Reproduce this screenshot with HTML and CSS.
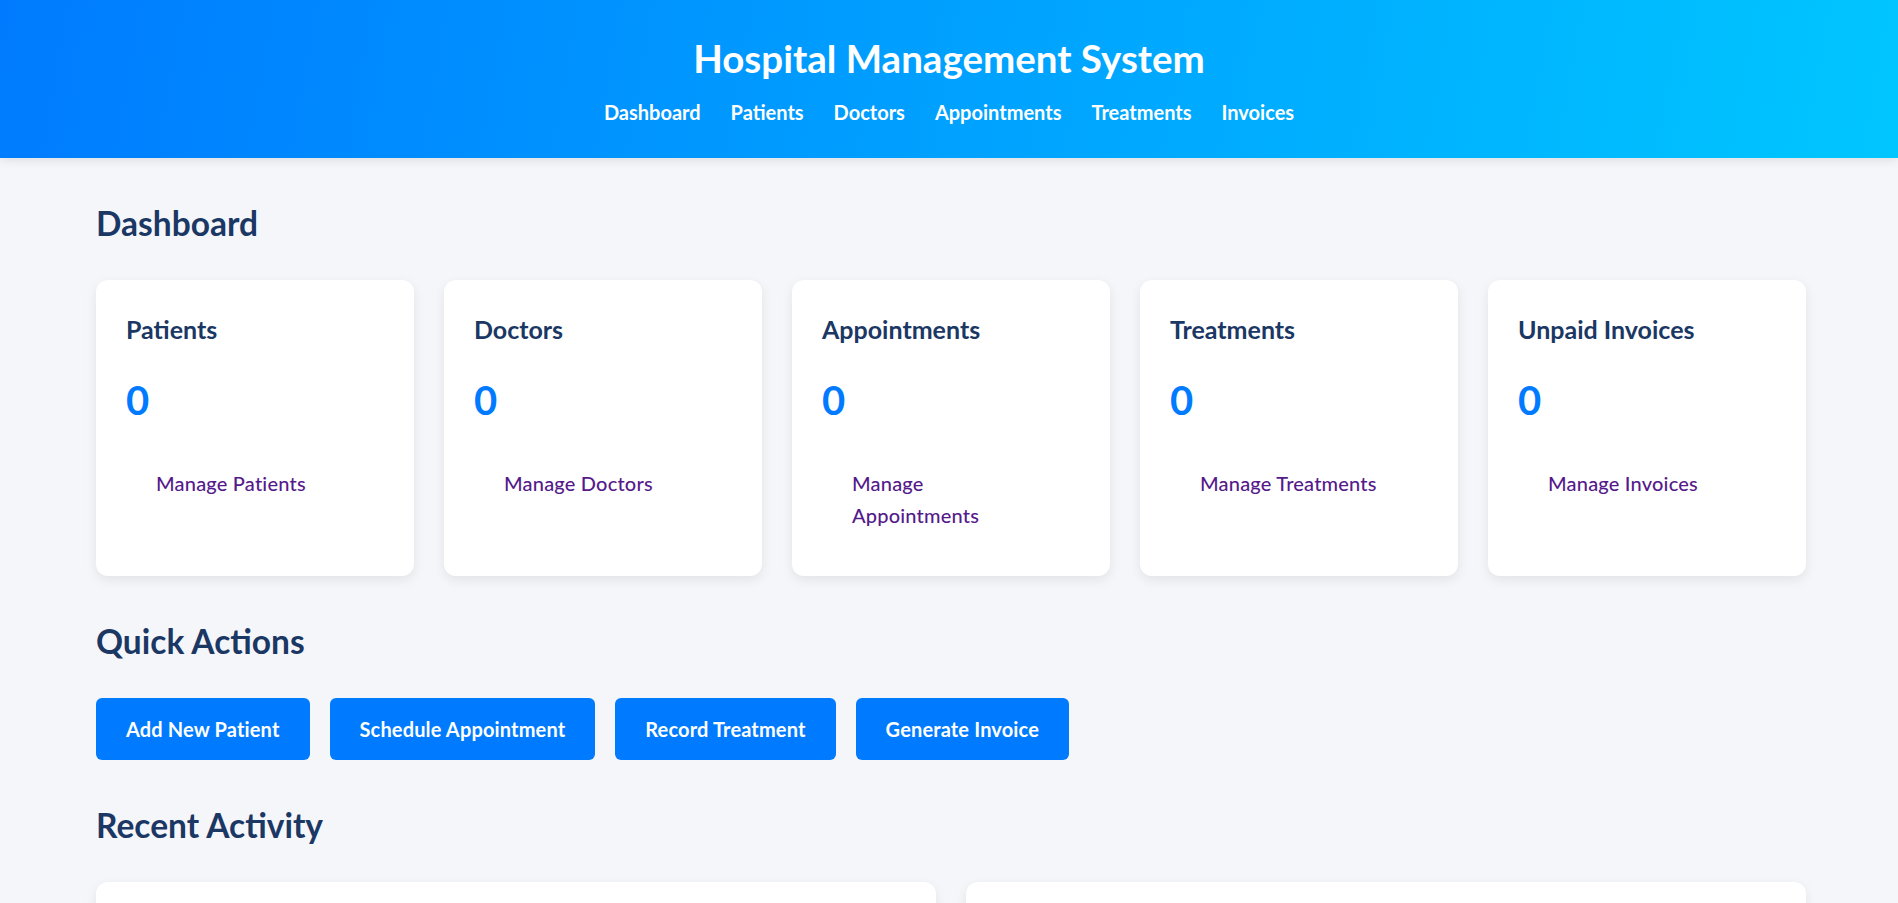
FILE: index.html
```html
<!DOCTYPE html>
<html lang="en">
<head>
<meta charset="UTF-8">
<title>Hospital Management System</title>
<link rel="stylesheet" href="styles.css">
</head>
<body>
<header class="site-header">
  <h1 class="site-title">Hospital Management System</h1>
  <nav class="main-nav">
    <a href="#">Dashboard</a>
    <a href="#">Patients</a>
    <a href="#">Doctors</a>
    <a href="#">Appointments</a>
    <a href="#">Treatments</a>
    <a href="#">Invoices</a>
  </nav>
</header>
<main class="container">
  <section class="section">
    <h2 class="section-title">Dashboard</h2>
    <div class="stats-grid">
      <div class="stat-card">
        <h3 class="stat-title">Patients</h3>
        <p class="stat-number">0</p>
        <a class="stat-link" href="#">Manage Patients</a>
      </div>
      <div class="stat-card">
        <h3 class="stat-title">Doctors</h3>
        <p class="stat-number">0</p>
        <a class="stat-link" href="#">Manage Doctors</a>
      </div>
      <div class="stat-card">
        <h3 class="stat-title">Appointments</h3>
        <p class="stat-number">0</p>
        <a class="stat-link" href="#">Manage Appointments</a>
      </div>
      <div class="stat-card">
        <h3 class="stat-title">Treatments</h3>
        <p class="stat-number">0</p>
        <a class="stat-link" href="#">Manage Treatments</a>
      </div>
      <div class="stat-card">
        <h3 class="stat-title">Unpaid Invoices</h3>
        <p class="stat-number">0</p>
        <a class="stat-link" href="#">Manage Invoices</a>
      </div>
    </div>
  </section>
  <section class="section">
    <h2 class="section-title">Quick Actions</h2>
    <div class="actions">
      <a class="btn" href="#">Add New Patient</a>
      <a class="btn" href="#">Schedule Appointment</a>
      <a class="btn" href="#">Record Treatment</a>
      <a class="btn" href="#">Generate Invoice</a>
    </div>
  </section>
  <section class="section">
    <h2 class="section-title">Recent Activity</h2>
    <div class="activity-grid">
      <div class="activity-card"></div>
      <div class="activity-card"></div>
    </div>
  </section>
</main>
</body>
</html>
```
FILE: styles.css
```css
* {
  box-sizing: border-box;
}

body {
  margin: 0;
  font-family: "Segoe UI", Lato, "Noto Sans", sans-serif;
  font-size: 20px;
  line-height: 1.6;
  background: #f5f6fa;
  color: #333;
}

.site-header {
  background: linear-gradient(100deg, #007bff 0%, #00c6ff 100%);
  color: #fff;
  text-align: center;
  padding: 30px 20px 30px;
  box-shadow: 0 2px 10px rgba(0, 0, 0, 0.1);
}

.site-title {
  margin: 0 0 8px;
  font-size: 38.5px;
  font-weight: 700;
  line-height: 1.5;
}

.main-nav {
  display: flex;
  justify-content: center;
  gap: 30px;
}

.main-nav a {
  color: #fff;
  text-decoration: none;
  font-weight: 700;
  font-size: 20px;
}

.container {
  padding: 40px 92px 0 96px;
}

.section {
  margin-bottom: 40px;
}

.section-title {
  margin: 0 0 30px;
  font-size: 33.5px;
  font-weight: 700;
  line-height: 1.55;
  color: #1b3764;
}

.stats-grid {
  display: grid;
  grid-template-columns: repeat(5, 1fr);
  gap: 30px;
}

.stat-card {
  background: #fff;
  border-radius: 12px;
  padding: 30px;
  box-shadow: 0 4px 12px rgba(0, 0, 0, 0.08);
}

.stat-title {
  margin: 0 0 20px;
  font-size: 25px;
  font-weight: 700;
  line-height: 1.55;
  color: #1b3764;
}

.stat-number {
  margin: 0 0 20px;
  font-size: 40px;
  font-weight: 700;
  line-height: 1.6;
  color: #007bff;
}

.stat-link {
  display: inline-block;
  padding: 15px 30px;
  color: #551a8b;
  text-decoration: none;
  font-weight: 500;
  letter-spacing: 0.2px;
}

.actions {
  display: flex;
  gap: 20px;
}

.btn {
  display: inline-block;
  padding: 15px 30px;
  background: #007bff;
  color: #fff;
  text-decoration: none;
  font-weight: 700;
  letter-spacing: 0.15px;
  border-radius: 6px;
}

.activity-grid {
  display: grid;
  grid-template-columns: 1fr 1fr;
  gap: 30px;
}

.activity-card {
  background: #fff;
  border-radius: 12px;
  padding: 30px;
  min-height: 300px;
  box-shadow: 0 4px 12px rgba(0, 0, 0, 0.08);
}
```
